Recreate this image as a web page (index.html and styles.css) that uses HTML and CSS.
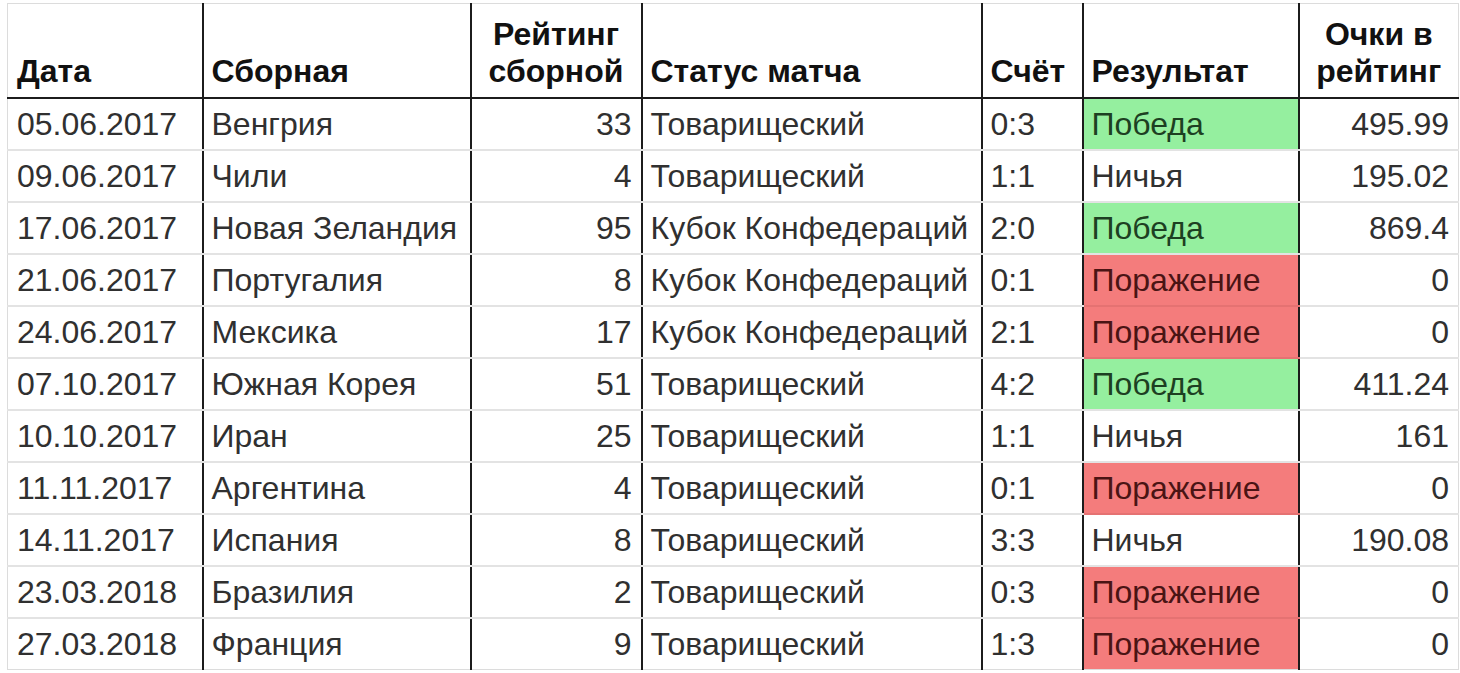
FILE: index.html
```html
<!DOCTYPE html>
<html lang="ru">
<head>
<meta charset="utf-8">
<title>Матчи сборной</title>
<link rel="stylesheet" href="styles.css">
</head>
<body>
<div class="sheet">
<table class="matches">
  <colgroup>
    <col class="c-date">
    <col class="c-team">
    <col class="c-rank">
    <col class="c-status">
    <col class="c-score">
    <col class="c-result">
    <col class="c-points">
  </colgroup>
  <thead>
    <tr>
      <th>Дата</th>
      <th>Сборная</th>
      <th class="center">Рейтинг<br>сборной</th>
      <th>Статус матча</th>
      <th>Счёт</th>
      <th>Результат</th>
      <th class="center">Очки в<br>рейтинг</th>
    </tr>
  </thead>
  <tbody>
    <tr><td>05.06.2017</td><td>Венгрия</td><td class="num">33</td><td>Товарищеский</td><td>0:3</td><td class="win">Победа</td><td class="num">495.99</td></tr>
    <tr><td>09.06.2017</td><td>Чили</td><td class="num">4</td><td>Товарищеский</td><td>1:1</td><td>Ничья</td><td class="num">195.02</td></tr>
    <tr><td>17.06.2017</td><td>Новая Зеландия</td><td class="num">95</td><td>Кубок Конфедераций</td><td>2:0</td><td class="win">Победа</td><td class="num">869.4</td></tr>
    <tr><td>21.06.2017</td><td>Португалия</td><td class="num">8</td><td>Кубок Конфедераций</td><td>0:1</td><td class="loss">Поражение</td><td class="num">0</td></tr>
    <tr><td>24.06.2017</td><td>Мексика</td><td class="num">17</td><td>Кубок Конфедераций</td><td>2:1</td><td class="loss">Поражение</td><td class="num">0</td></tr>
    <tr><td>07.10.2017</td><td>Южная Корея</td><td class="num">51</td><td>Товарищеский</td><td>4:2</td><td class="win">Победа</td><td class="num">411.24</td></tr>
    <tr><td>10.10.2017</td><td>Иран</td><td class="num">25</td><td>Товарищеский</td><td>1:1</td><td>Ничья</td><td class="num">161</td></tr>
    <tr><td>11.11.2017</td><td>Аргентина</td><td class="num">4</td><td>Товарищеский</td><td>0:1</td><td class="loss">Поражение</td><td class="num">0</td></tr>
    <tr><td>14.11.2017</td><td>Испания</td><td class="num">8</td><td>Товарищеский</td><td>3:3</td><td>Ничья</td><td class="num">190.08</td></tr>
    <tr><td>23.03.2018</td><td>Бразилия</td><td class="num">2</td><td>Товарищеский</td><td>0:3</td><td class="loss">Поражение</td><td class="num">0</td></tr>
    <tr><td>27.03.2018</td><td>Франция</td><td class="num">9</td><td>Товарищеский</td><td>1:3</td><td class="loss">Поражение</td><td class="num">0</td></tr>
  </tbody>
</table>
</div>
</body>
</html>
```
FILE: styles.css
```css
html, body {
  margin: 0;
  padding: 0;
  background: #ffffff;
}

.sheet {
  padding: 3px 0 0 7px;
}

.matches {
  border-collapse: collapse;
  table-layout: fixed;
  width: 1451px;
  font-family: "Liberation Sans", Arial, sans-serif;
  font-size: 32px;
  color: #303030;
  border: 1px solid #dcdcdc;
}

.c-date { width: 195px; }
.c-team { width: 268px; }
.c-rank { width: 171px; }
.c-status { width: 340px; }
.c-score { width: 101px; }
.c-result { width: 216px; }
.c-points { width: 160px; }

.matches th,
.matches td {
  padding: 0 9px 0 8px;
  white-space: nowrap;
  overflow: hidden;
  border-left: 2px solid #1c1c1c;
  border-right: 2px solid #1c1c1c;
}

.matches th:first-child,
.matches td:first-child {
  padding-left: 9px;
  border-left: 1px solid #dcdcdc;
}

.matches th:last-child,
.matches td:last-child {
  border-right: 1px solid #dcdcdc;
}

.matches thead tr {
  height: 94px;
}

.matches th {
  font-weight: bold;
  color: #111111;
  text-align: left;
  vertical-align: bottom;
  line-height: 37px;
  padding-bottom: 7px;
  border-bottom: 2px solid #1c1c1c;
  border-top: 1px solid #dcdcdc;
}

.matches th.center {
  text-align: center;
  padding-left: 4px;
  padding-right: 4px;
}

.matches tbody tr {
  height: 52px;
}

.matches td {
  vertical-align: middle;
  line-height: 34px;
  padding-top: 0;
  border-bottom: 2px solid #e3e3e3;
}

.matches tbody tr:last-child td {
  border-bottom: 1px solid #dcdcdc;
}

.matches td.num {
  text-align: right;
}

.matches td.win {
  background: #95ef9f;
  color: #1d3f22;
}

.matches td.loss {
  background: #f47c7c;
  color: #4a1414;
  border-bottom-color: #e57272;
}
```
